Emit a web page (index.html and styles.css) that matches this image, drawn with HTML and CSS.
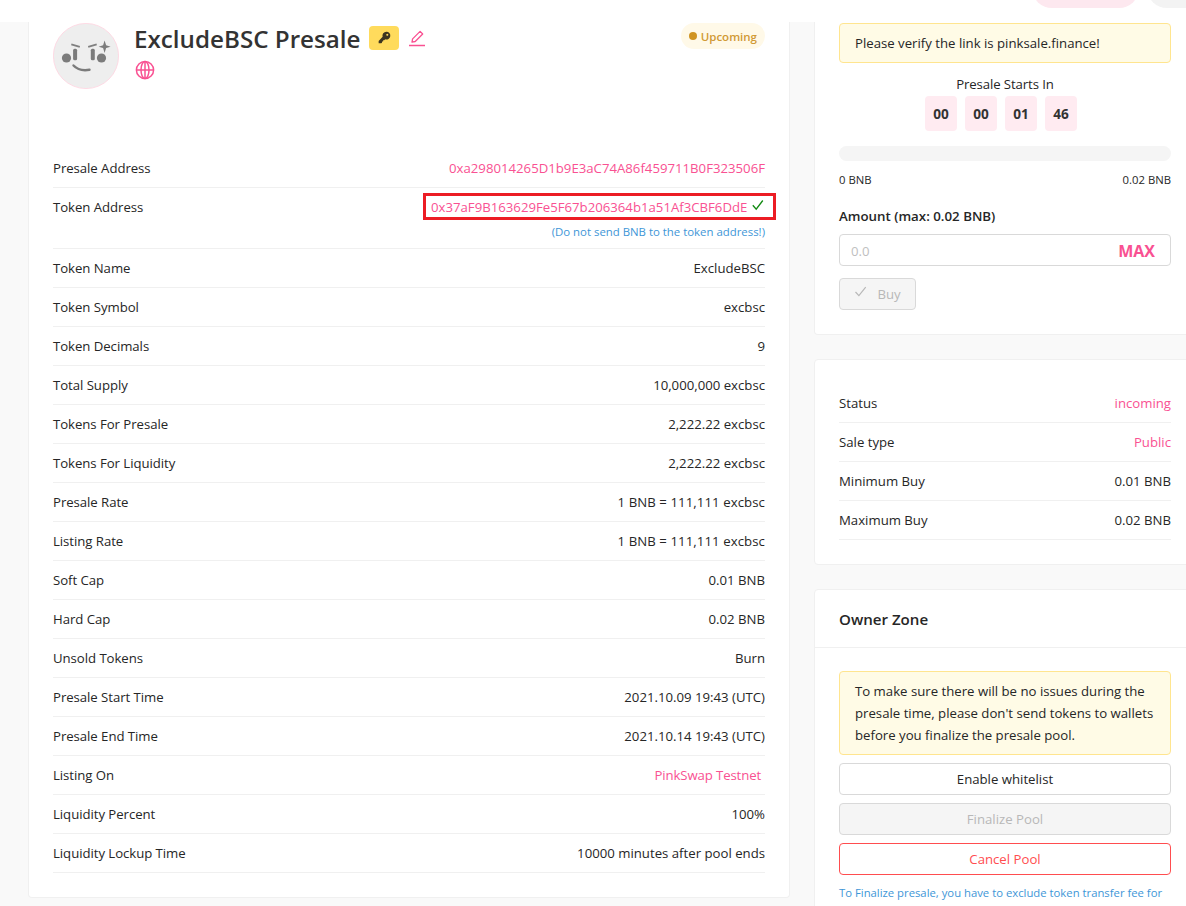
FILE: index.html
```html
<!DOCTYPE html>
<html lang="en">
<head>
<meta charset="utf-8">
<title>ExcludeBSC Presale</title>
<link rel="stylesheet" href="styles.css">
</head>
<body>
<header class="topbar"><span class="pill pill-pink"></span><span class="pill pill-gray"></span></header>
<main class="layout">
  <section class="card details">
    <div class="intro">
      <svg class="avatar" viewBox="0 0 66 66">
        <circle cx="33" cy="33" r="32.6" fill="#eee" stroke="#ffd3df" stroke-width=".8"/>
        <g fill="#7b7b7b"><circle cx="13.500" cy="35" r="4.600"/><circle cx="48.500" cy="35" r="4.600"/>
        <rect x="20.100" y="25.800" width="4" height="11.400" rx="1.500"/><rect x="37.800" y="25.800" width="4" height="11.400" rx="1.500"/>
        <path d="M51.600 17.500l1.500 4.800 4.500 1.400-4.500 1.400-1.500 4.900-1.500-4.900-4.500-1.400 4.500-1.400z"/></g>
        <path d="M18.300 21.300l8.500 2.500M43.700 21.300l-8.500 2.500" fill="none" stroke="#808080" stroke-width="1.800"/>
        <path d="M20.500 42.500q5.500 6 16 4.300" fill="none" stroke="#7b7b7b" stroke-width="2.400" stroke-linecap="round"/>
      </svg>
      <div class="heading">
        <div class="title-row">
          <h1 class="title">ExcludeBSC Presale</h1>
          <span class="key-tag"><svg width="13" height="13" viewBox="0 0 14 14"><path fill="#3d3520" fill-rule="evenodd" d="M9 .8a4.200 4.200 0 1 1-1.200 8.200L6.700 10H5.500v1.200H4.300v1.500L3.500 13.300H.7v-2.600L5 6.300A4.200 4.200 0 0 1 9 .8zM10 3a1.100 1.100 0 1 0 .01 0z"/></svg></span>
          <svg class="edit" width="16" height="18" viewBox="0 0 16 18"><path d="M3 12.200l.6-3.300L11.100 1.400l2.600 2.600-7.500 7.500z" fill="none" stroke="#f95192" stroke-width="1.300" stroke-linejoin="round"/><path d="M0 15.500h16" stroke="#f95192" stroke-width="1.500"/></svg>
        </div>
        <svg class="globe" width="20" height="20" viewBox="0 0 20 20" fill="none" stroke="#f95192" stroke-width="1.500"><circle cx="10" cy="10" r="8.600"/><ellipse cx="10" cy="10" rx="4" ry="8.600"/><path d="M1.400 10h17.200M10 1.400v17.200"/></svg>
      </div>
      <span class="status"><i class="dot"></i>Upcoming</span>
    </div>
    <div class="rows">
      <div class="row"><span>Presale Address</span><a class="link addr">0xa298014265D1b9E3aC74A86f459711B0F323506F</a></div>
      <div class="row"><span>Token Address</span><div class="stack"><div class="marked"><a class="link addr2">0x37aF9B163629Fe5F67b206364b1a51Af3CBF6DdE</a><svg width="14" height="14" viewBox="0 0 14 14"><path d="M1.800 7.300l3.400 3.900 6.600-8.700" fill="none" stroke="#128a12" stroke-width="1.300"/></svg></div><div class="hint">(Do not send BNB to the token address!)</div></div></div>
      <div class="row"><span>Token Name</span><span>ExcludeBSC</span></div>
      <div class="row"><span>Token Symbol</span><span>excbsc</span></div>
      <div class="row"><span>Token Decimals</span><span>9</span></div>
      <div class="row"><span>Total Supply</span><span>10,000,000 excbsc</span></div>
      <div class="row"><span>Tokens For Presale</span><span>2,222.22 excbsc</span></div>
      <div class="row"><span>Tokens For Liquidity</span><span>2,222.22 excbsc</span></div>
      <div class="row"><span>Presale Rate</span><span class="rate">1 BNB = 111,111 excbsc</span></div>
      <div class="row"><span>Listing Rate</span><span class="rate">1 BNB = 111,111 excbsc</span></div>
      <div class="row"><span>Soft Cap</span><span>0.01 BNB</span></div>
      <div class="row"><span>Hard Cap</span><span>0.02 BNB</span></div>
      <div class="row"><span>Unsold Tokens</span><span>Burn</span></div>
      <div class="row"><span>Presale Start Time</span><span>2021.10.09 19:43 (UTC)</span></div>
      <div class="row"><span>Presale End Time</span><span>2021.10.14 19:43 (UTC)</span></div>
      <div class="row"><span>Listing On</span><a class="link swap">PinkSwap Testnet</a></div>
      <div class="row"><span>Liquidity Percent</span><span>100%</span></div>
      <div class="row"><span>Liquidity Lockup Time</span><span>10000 minutes after pool ends</span></div>
    </div>
  </section>
  <aside class="side">
    <section class="card buy">
      <div class="alert">Please verify the link is pinksale.finance!</div>
      <div class="starts">Presale Starts In</div>
      <div class="timer"><b>00</b><b>00</b><b>01</b><b>46</b></div>
      <div class="progress"></div>
      <div class="range"><span>0 BNB</span><span>0.02 BNB</span></div>
      <div class="label">Amount (max: 0.02 BNB)</div>
      <div class="input"><span>0.0</span><b class="max">MAX</b></div>
      <div class="btn disabled btn-buy"><svg width="14" height="14" viewBox="0 0 14 14"><path d="M1.500 7l3.400 3.700 6.800-8.500" fill="none" stroke="#b8b8b8" stroke-width="1.200"/></svg>Buy</div>
    </section>
    <section class="card info">
      <div class="row"><span>Status</span><span class="link">incoming</span></div>
      <div class="row"><span>Sale type</span><span class="link">Public</span></div>
      <div class="row"><span>Minimum Buy</span><span>0.01 BNB</span></div>
      <div class="row"><span>Maximum Buy</span><span>0.02 BNB</span></div>
    </section>
    <section class="card owner">
      <h2 class="owner-head">Owner Zone</h2>
      <div class="owner-body">
        <div class="alert">To make sure there will be no issues during the<br>presale time, please don't send tokens to wallets<br>before you finalize the presale pool.</div>
        <div class="btn">Enable whitelist</div>
        <div class="btn disabled">Finalize Pool</div>
        <div class="btn danger">Cancel Pool</div>
        <div class="note">To Finalize presale, you have to exclude token transfer fee for</div>
      </div>
    </section>
  </aside>
</main>
</body>
</html>
```
FILE: styles.css
```css
* { box-sizing: border-box; }
body {
  margin: 0;
  height: 906px;
  overflow: hidden;
  background: #f9f9f9;
  color: #262626;
  font: 13.2px/22px "Open Sans", sans-serif;
}
.topbar {
  height: 22px;
  background: #fff;
  display: flex;
  gap: 8px;
  padding-left: 1032px;
  overflow: hidden;
}
.pill { flex: none; height: 40px; margin-top: -32px; border-radius: 20px; }
.pill-pink { width: 107px; background: #fde8ef; }
.pill-gray { width: 107px; background: #f3f3f3; }
.layout { display: grid; grid-template-columns: 762px 382px; gap: 24px; padding-left: 28px; align-items: start; }
.card { background: #fff; border: 1px solid #f0f0f0; border-radius: 4px; }
.details, .buy { border-top: 0; border-radius: 0 0 4px 4px; padding: 1px 24px 24px; }
.details { height: 876px; }
.intro { display: flex; height: 126px; align-items: flex-start; }
.avatar { width: 66px; height: 66px; margin-right: 16px; flex: none; }
.heading { flex: 1; }
.title-row { display: flex; height: 32px; align-items: center; }
.title { margin: 0 0 0 -1px; font-size: 24.2px; line-height: 32px; font-weight: 600; color: #333; white-space: nowrap; width: 235px; }
.key-tag { width: 30px; height: 24px; border-radius: 4px; background: #ffdb5c; display: flex; align-items: center; justify-content: center; margin-bottom: 2px; }
.key-tag svg { margin-top: -2px; }
.edit { margin-left: 10px; }
.globe { display: block; margin-top: 5px; }
.status { display: flex; align-items: center; height: 26px; border-radius: 13px; padding: 2px 8px 0; gap: 4px; background: #fff9e8; color: #d19a35; font-size: 11.5px; font-weight: 600; }
.dot { width: 8px; height: 8px; margin-top: -2px; border-radius: 4px; background: #d09422; }
.row { display: flex; justify-content: space-between; padding: 8px 0; border-bottom: 1px solid #f0f0f0; white-space: nowrap; }
.details .row > span:first-child { letter-spacing: -.05px; }
.link { color: #f95192; }
.rate { letter-spacing: .08px; }
.swap { margin-right: 4px; letter-spacing: -.12px; }
.stack { display: flex; flex-direction: column; align-items: flex-end; }
.marked { display: flex; align-items: center; gap: 4px; width: 353px; height: 27px; margin: -3px -11px 1px 0; padding: 1px 8px 0 5px; border: 3px solid #ec1c24; }
.addr2 { flex: 1; }
.marked svg { flex: none; margin: -4px 3px 0 0; }
.hint, .note { color: #3e96d7; font-size: 11.3px; }
.hint { height: 20px; line-height: 22px; font-size: 11.4px; }
.stack { height: 44px; }
.alert { border: 1px solid #ffe58f; border-radius: 4px; background: #fffbe6; padding: 8px 15px; white-space: nowrap; }
.starts { text-align: center; margin-top: 10px; margin-bottom: 1px; letter-spacing: -.1px; }
.timer { display: flex; justify-content: center; gap: 8px; padding-right: 8px; }
.timer b { width: 32px; height: 35px; line-height: 36px; text-align: center; border-radius: 4px; background: #ffebf1; font-size: 13.6px; color: #333; }
.progress { height: 15px; margin-top: 15px; border-radius: 8px; background: #f5f5f5; }
.range { display: flex; justify-content: space-between; font-size: 11.3px; margin-top: 8px; }
.label { font-weight: 600; margin-top: 14px; font-size: 13.3px; }
.input { height: 32px; margin-top: 7px; border: 1px solid #d9d9d9; border-radius: 4px; padding: 2px 15px 0 11px; display: flex; align-items: center; justify-content: space-between; color: #bfbfbf; }
.max { color: #f95192; font-size: 16px; }
.btn { height: 32px; border: 1px solid #d9d9d9; border-radius: 4px; background: #fff; display: flex; align-items: center; justify-content: center; }
.disabled { background: #f5f5f5; color: #b8b8b8; }
.danger { border-color: #ff4d4f; color: #ff4d4f; }
.btn-buy { width: 77px; margin-top: 12px; gap: 9px; }
.btn-buy svg { margin-top: -4px; }
.side { display: flex; flex-direction: column; gap: 24px; }
.buy { height: 313px; }
.info { height: 206px; padding: 24px; }
.owner-head { margin: 0; height: 58px; padding: 0 24px; line-height: 58px; font-size: 15.1px; font-weight: 600; border-bottom: 1px solid #f0f0f0; }
.owner-body { padding: 23px 24px; display: flex; flex-direction: column; gap: 8px; }
.note { white-space: nowrap; margin-top: -1px; }
```
